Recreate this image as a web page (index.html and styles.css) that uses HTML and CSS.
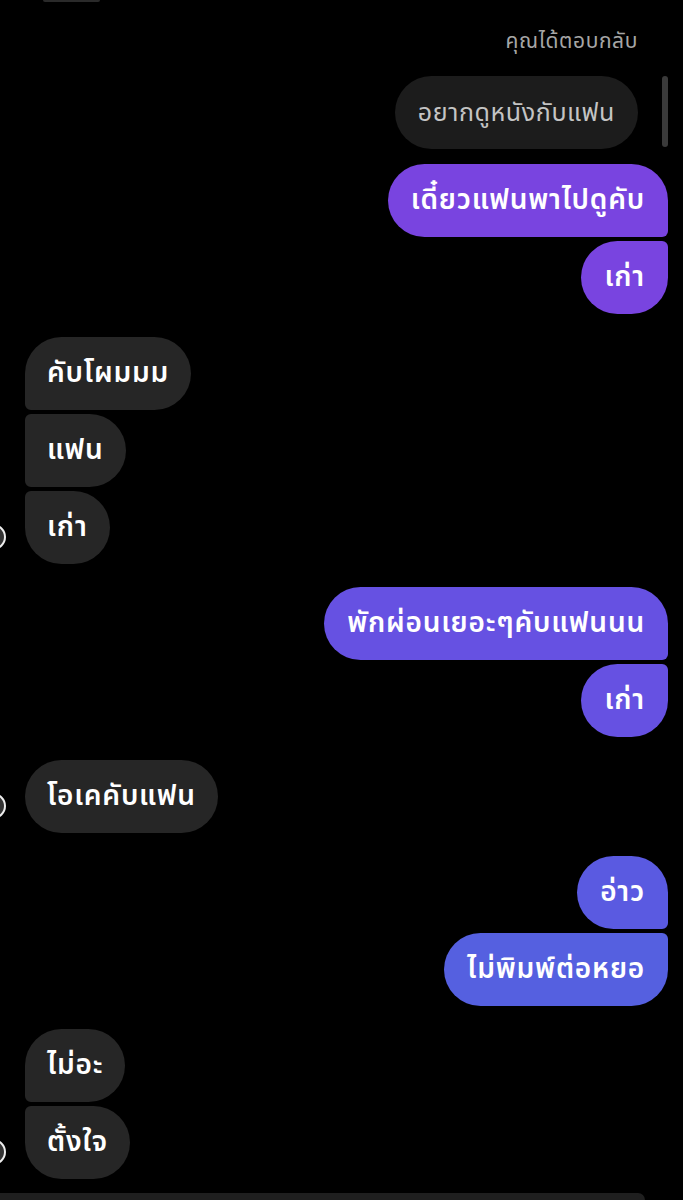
FILE: index.html
```html
<!DOCTYPE html>
<html lang="th">
<head>
    <meta charset="UTF-8">
    <title>แชท</title>
    <link rel="stylesheet" href="styles.css">
</head>
<body>
<div class="chat">
    <div class="top-edge"></div>

    <div class="reply">
        <div class="reply-label">คุณได้ตอบกลับ</div>
        <div class="reply-row">
            <div class="reply-bubble">อยากดูหนังกับแฟน</div>
            <div class="reply-line"></div>
        </div>
    </div>

    <div class="group me">
        <div class="bubble first c1">เดี๋ยวแฟนพาไปดูคับ</div>
        <div class="bubble last c1">เก่า</div>
    </div>

    <div class="group them">
        <div class="msgs">
            <div class="bubble first">คับโผมมม</div>
            <div class="bubble mid">แฟน</div>
            <div class="bubble last">เก่า</div>
        </div>
    </div>

    <div class="group me">
        <div class="bubble first c2">พักผ่อนเยอะๆคับแฟนนน</div>
        <div class="bubble last c2">เก่า</div>
    </div>

    <div class="group them">
        <div class="msgs">
            <div class="bubble single">โอเคคับแฟน</div>
        </div>
    </div>

    <div class="group me">
        <div class="bubble first c3">อ่าว</div>
        <div class="bubble last c4">ไม่พิมพ์ต่อหยอ</div>
    </div>

    <div class="group them">
        <div class="msgs">
            <div class="bubble first">ไม่อะ</div>
            <div class="bubble last">ตั้งใจ</div>
        </div>
    </div>

    <div class="composer"></div>
</div>
</body>
</html>
```

FILE: styles.css
```css
body{
    margin: 0;
    background: #000;
    font-family: "Noto Sans Thai", "Noto Sans", "DejaVu Sans", sans-serif;
    color: #fff;
}
.chat{
    width: 683px;
    height: 1200px;
    overflow: hidden;
    display: flex;
    flex-direction: column;
}
.top-edge{
    width: 57px;
    height: 2px;
    margin-left: 43px;
    background: #2a2a2a;
    border-radius: 0 0 2px 2px;
}
.reply{
    display: flex;
    flex-direction: column;
    align-items: flex-end;
    padding-right: 15px;
    margin-top: 27px;
}
.reply-label{
    color: #a6a6a6;
    font-size: 21px;
    letter-spacing: 0.6px;
    line-height: 26px;
    margin-right: 30px;
}
.reply-row{
    display: flex;
    align-items: flex-start;
    gap: 24px;
    margin-top: 21px;
}
.reply-bubble{
    background: #1c1c1c;
    color: #c4c4c4;
    font-size: 25px;
    letter-spacing: 0.6px;
    height: 73px;
    padding: 0 23px;
    border-radius: 37px;
    display: flex;
    align-items: center;
}
.reply-line{
    width: 6px;
    height: 71px;
    background: #3a3a3a;
    border-radius: 3px;
}
.group{
    display: flex;
    flex-direction: column;
    gap: 4px;
    margin-top: 23px;
}
.reply + .group{
    margin-top: 15px;
}
.me{
    align-items: flex-end;
    padding-right: 15px;
}
.them{
    flex-direction: row;
    padding-left: 25px;
}
.msgs{
    display: flex;
    flex-direction: column;
    align-items: flex-start;
    gap: 4px;
}
.bubble{
    height: 73px;
    padding: 0 23px;
    font-size: 28px;
    letter-spacing: 0.8px;
    font-weight: 600;
    display: flex;
    align-items: center;
    border-radius: 37px;
    background: #262626;
    box-sizing: border-box;
}
.them .bubble{
    padding: 0 22px;
}
.me .first{ border-bottom-right-radius: 6px; }
.me .last{ border-top-right-radius: 6px; }
.them .first{ border-bottom-left-radius: 6px; }
.them .mid{ border-top-left-radius: 6px; border-bottom-left-radius: 6px; }
.them .last{ border-top-left-radius: 6px; }
.c1{ background: #7944e0; }
.c2{ background: #6651e2; }
.c3{ background: #5a5ae1; }
.c4{ background: #5560e0; }
.them .last, .them .single{
    position: relative;
}
.them .last::before, .them .single::before{
    content: "";
    position: absolute;
    left: -45px;
    bottom: 14px;
    width: 22px;
    height: 22px;
    border-radius: 50%;
    border: 2px solid #eee;
    background: #333;
}
.composer{
    margin-top: auto;
    width: 645px;
    height: 7px;
    background: #1f1f1f;
    border-radius: 0 14px 0 0;
    flex-shrink: 0;
}
```
